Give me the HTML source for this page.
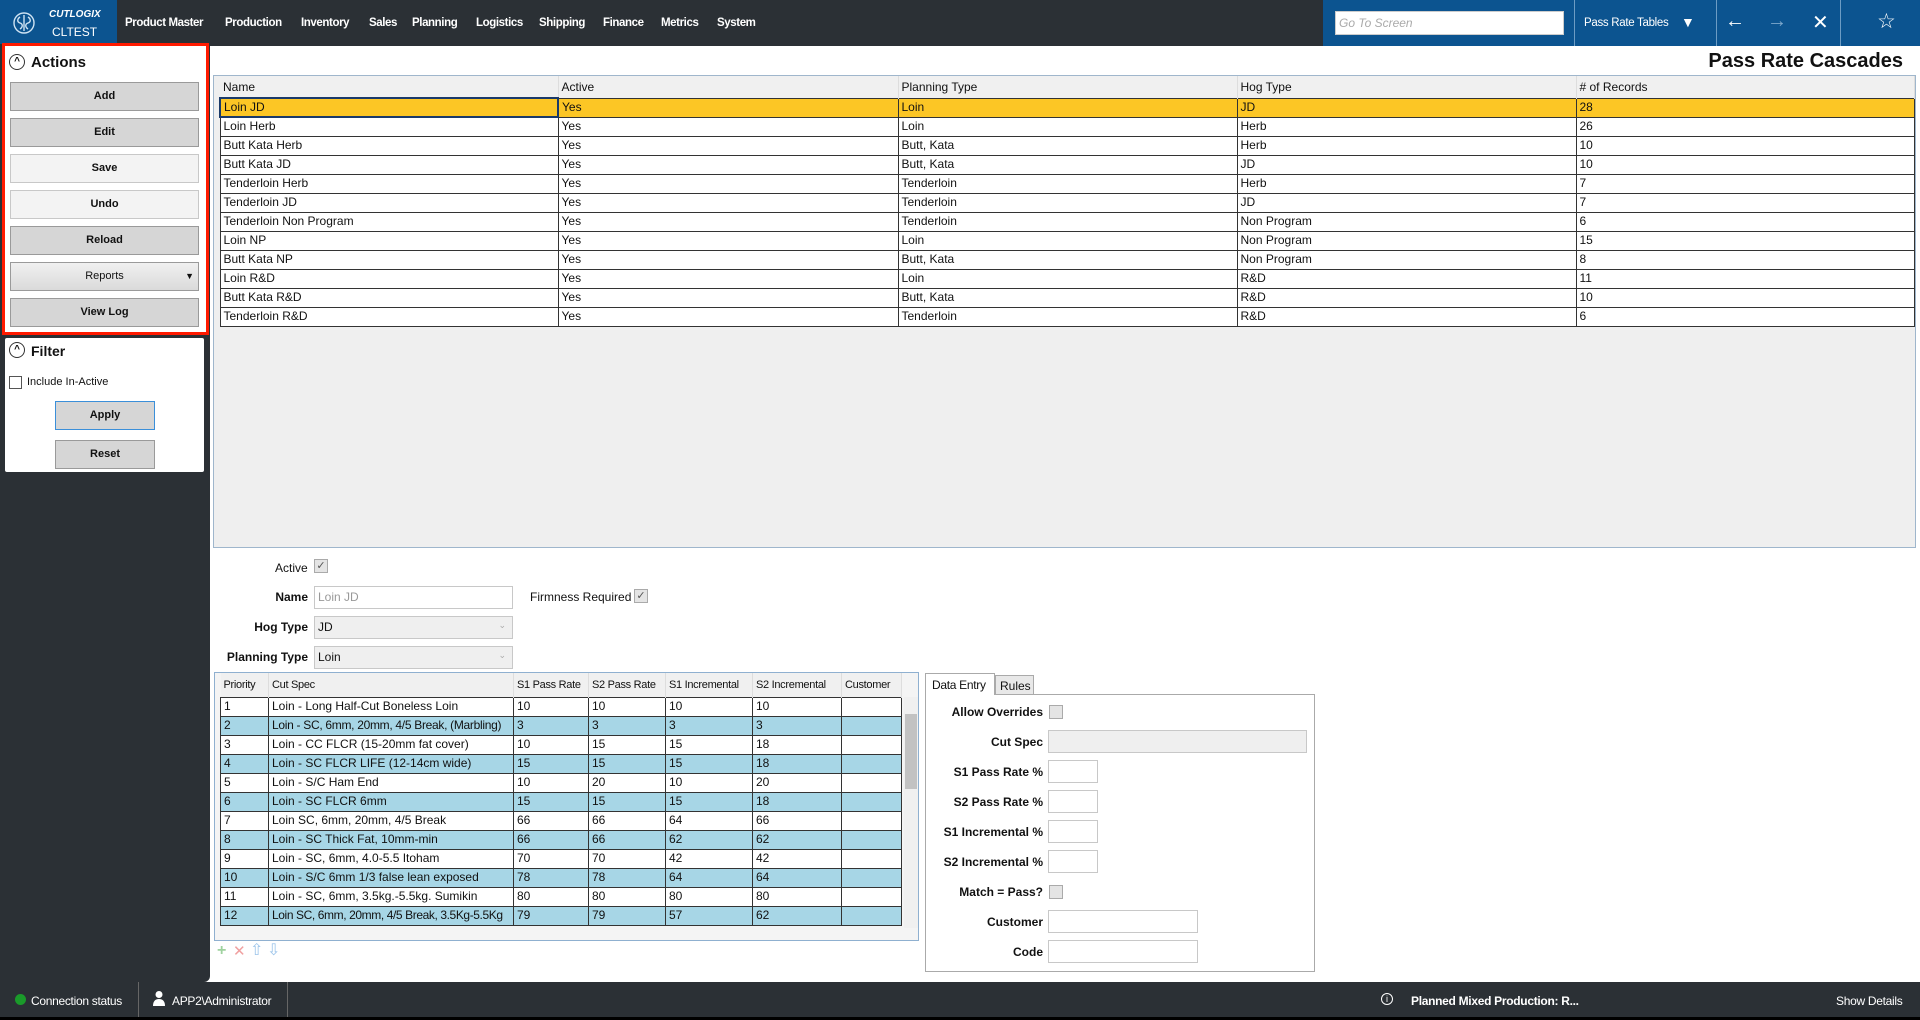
<!DOCTYPE html>
<html><head><meta charset="utf-8"><style>
*{box-sizing:border-box;margin:0;padding:0}
body{width:1920px;height:1020px;overflow:hidden;background:#fff;font-family:"Liberation Sans",sans-serif;font-size:12px;color:#111;position:relative}
.a{position:absolute;white-space:nowrap}
.nav{left:0;top:0;width:1920px;height:46px;background:#2b3035}
.logo{left:0;top:0;width:117px;height:44px;background:#0c5490}
.navi{top:17px;color:#fff;font-weight:bold;font-size:11.5px;letter-spacing:-0.4px}
.rb{top:0;left:1323px;width:597px;height:46px;background:#0c5490}
.side{left:0;top:46px;width:210px;height:936px;background:#2b3035;border-radius:0 0 6px 0}
.btn{position:absolute;left:10px;width:189px;height:29px;background:#d6d6d6;border:1px solid #9a9a9a;font-weight:bold;font-size:11px;text-align:center;line-height:27px}
.btn.l{background:#f3f3f3;border-color:#c8c8c8}
table{border-collapse:collapse;table-layout:fixed}
.g td{height:19px;border:1px solid #333;padding:0 3px;font-size:12px;white-space:nowrap;overflow:hidden;line-height:17px}
.g th{height:22px;font-weight:normal;text-align:left;padding:0 3px;font-size:12px;border-right:1px solid #ddd;background:#f0f0f0;white-space:nowrap;overflow:hidden}
.lg th{font-size:11px;letter-spacing:-0.3px}
.lbl{font-weight:bold;font-size:12px;text-align:right}
.inp{position:absolute;height:23px;border:1px solid #c8c8c8;background:#fff}
.cb{position:absolute;width:14px;height:14px;border:1px solid #aaa;background:#e4e4e4;font-size:11px;line-height:12px;text-align:center;color:#555}
.bl td{background:#a7d6e6}
</style></head><body>
<div class="a nav"></div>
<div class="a logo">
<svg class="a" style="left:12px;top:11px" width="24" height="24" viewBox="0 0 24 24" fill="none" stroke="#cfe3f3" stroke-width="1.4"><circle cx="12" cy="12" r="10"/><path d="M8 6c-3 2-3 5 0 6s3 4 0 6M16 6c3 2 3 5 0 6s-3 4 0 6M12 4v16"/></svg>
<div class="a" style="left:49px;top:9px;color:#fff;font-weight:bold;font-style:italic;font-size:10px">CUTLOGIX</div>
<div class="a" style="left:52px;top:25px;color:#fff;font-size:12px">CLTEST</div>
</div>
<div class="a navi" style="left:125px">Product Master</div>
<div class="a navi" style="left:225px">Production</div>
<div class="a navi" style="left:301px">Inventory</div>
<div class="a navi" style="left:369px">Sales</div>
<div class="a navi" style="left:412px">Planning</div>
<div class="a navi" style="left:476px">Logistics</div>
<div class="a navi" style="left:539px">Shipping</div>
<div class="a navi" style="left:603px">Finance</div>
<div class="a navi" style="left:661px">Metrics</div>
<div class="a navi" style="left:717px">System</div>
<div class="a rb"></div>
<div class="a" style="left:1335px;top:11px;width:229px;height:24px;background:#fff;border:1px solid #ccc;color:#aaa;font-style:italic;font-size:12px;padding:4px 3px">Go To Screen</div>
<div class="a" style="left:1574px;top:0;width:1px;height:46px;background:#6d9cc4"></div>
<div class="a" style="left:1716px;top:0;width:1px;height:46px;background:#6d9cc4"></div>
<div class="a" style="left:1840px;top:0;width:1px;height:46px;background:#6d9cc4"></div>
<div class="a" style="left:1584px;top:17px;color:#fff;font-size:11.5px;letter-spacing:-0.3px">Pass Rate Tables</div>
<div class="a" style="left:1681px;top:14px;color:#fff;font-size:14px">▼</div>
<div class="a" style="left:1725px;top:10px;color:#fff;font-size:20px">←</div>
<div class="a" style="left:1767px;top:10px;color:#7ea8cc;font-size:20px">→</div>
<div class="a" style="left:1812px;top:10px;color:#fff;font-size:20px">✕</div>
<div class="a" style="left:1877px;top:9px;color:#fff;font-size:21px">☆</div>

<div class="a side"></div>
<div class="a" style="left:2px;top:43px;width:207px;height:292px;background:#fff;border:3px solid #ff1a00"></div>
<div class="a" style="left:9px;top:54px;width:16px;height:16px;border:1.5px solid #333;border-radius:50%;font-size:10px;text-align:center;line-height:14px;font-weight:bold">^</div>
<div class="a" style="left:31px;top:54px;font-weight:bold;font-size:15px">Actions</div>
<div class="btn" style="top:82px">Add</div>
<div class="btn" style="top:118px">Edit</div>
<div class="btn l" style="top:154px">Save</div>
<div class="btn l" style="top:190px">Undo</div>
<div class="btn" style="top:226px">Reload</div>
<div class="btn" style="top:262px;font-weight:normal;background:linear-gradient(#f0f0f0,#dadada)">Reports<span style="position:absolute;right:4px;font-size:9px">▼</span></div>
<div class="btn" style="top:298px">View Log</div>
<div class="a" style="left:5px;top:338px;width:199px;height:134px;background:#fff;border-radius:2px"></div>
<div class="a" style="left:9px;top:342px;width:16px;height:16px;border:1.5px solid #333;border-radius:50%;font-size:10px;text-align:center;line-height:14px;font-weight:bold">^</div>
<div class="a" style="left:31px;top:343px;font-weight:bold;font-size:14px">Filter</div>
<div class="a" style="left:9px;top:376px;width:13px;height:13px;border:1px solid #555;background:#fff"></div>
<div class="a" style="left:27px;top:376px;font-size:11px">Include In-Active</div>
<div class="btn" style="left:55px;top:401px;width:100px;border-color:#3b8fd9">Apply</div>
<div class="btn" style="left:55px;top:440px;width:100px">Reset</div>

<div class="a" style="right:17px;top:50px;font-weight:bold;font-size:20px">Pass Rate Cascades</div>

<div class="a" style="left:213px;top:75px;width:1703px;height:473px;background:#efefef;border:1px solid #9fb6cc">
<table class="g" style="margin-left:5px;width:1696px">
<colgroup><col style="width:338px"><col style="width:340px"><col style="width:339px"><col style="width:339px"><col></colgroup>
<tr><th>Name</th><th>Active</th><th>Planning Type</th><th>Hog Type</th><th># of Records</th></tr>
<tr style="background:#fcc625"><td style="border:2px solid #1a3a6a">Loin JD</td><td>Yes</td><td>Loin</td><td>JD</td><td>28</td></tr>
<tr style="background:#fff"><td>Loin Herb</td><td>Yes</td><td>Loin</td><td>Herb</td><td>26</td></tr>
<tr style="background:#fff"><td>Butt Kata Herb</td><td>Yes</td><td>Butt, Kata</td><td>Herb</td><td>10</td></tr>
<tr style="background:#fff"><td>Butt Kata JD</td><td>Yes</td><td>Butt, Kata</td><td>JD</td><td>10</td></tr>
<tr style="background:#fff"><td>Tenderloin Herb</td><td>Yes</td><td>Tenderloin</td><td>Herb</td><td>7</td></tr>
<tr style="background:#fff"><td>Tenderloin JD</td><td>Yes</td><td>Tenderloin</td><td>JD</td><td>7</td></tr>
<tr style="background:#fff"><td>Tenderloin Non Program</td><td>Yes</td><td>Tenderloin</td><td>Non Program</td><td>6</td></tr>
<tr style="background:#fff"><td>Loin NP</td><td>Yes</td><td>Loin</td><td>Non Program</td><td>15</td></tr>
<tr style="background:#fff"><td>Butt Kata NP</td><td>Yes</td><td>Butt, Kata</td><td>Non Program</td><td>8</td></tr>
<tr style="background:#fff"><td>Loin R&amp;D</td><td>Yes</td><td>Loin</td><td>R&amp;D</td><td>11</td></tr>
<tr style="background:#fff"><td>Butt Kata R&amp;D</td><td>Yes</td><td>Butt, Kata</td><td>R&amp;D</td><td>10</td></tr>
<tr style="background:#fff"><td>Tenderloin R&amp;D</td><td>Yes</td><td>Tenderloin</td><td>R&amp;D</td><td>6</td></tr>
</table></div>

<div class="a" style="left:275px;top:561px;font-size:12px">Active</div>
<div class="cb" style="left:314px;top:559px">✓</div>
<div class="a lbl" style="left:200px;width:108px;top:590px">Name</div>
<div class="inp" style="left:314px;top:586px;width:199px;color:#999;padding:3px">Loin JD</div>
<div class="a" style="left:530px;top:590px">Firmness Required</div>
<div class="cb" style="left:634px;top:589px">✓</div>
<div class="a lbl" style="left:200px;width:108px;top:620px">Hog Type</div>
<div class="inp" style="left:314px;top:616px;width:199px;background:#efefef;padding:3px">JD<span style="position:absolute;right:6px;color:#aaa;font-size:9px">⌄</span></div>
<div class="a lbl" style="left:200px;width:108px;top:650px">Planning Type</div>
<div class="inp" style="left:314px;top:646px;width:199px;background:#efefef;padding:3px">Loin<span style="position:absolute;right:6px;color:#aaa;font-size:9px">⌄</span></div>

<div class="a" style="left:214px;top:672px;width:705px;height:269px;border:1px solid #8fb0d0;background:#f4f4f4">
<table class="g lg" style="margin-left:5px;width:682px">
<colgroup><col style="width:48px"><col style="width:245px"><col style="width:75px"><col style="width:77px"><col style="width:87px"><col style="width:89px"><col></colgroup>
<tr><th style="height:24px">Priority</th><th>Cut Spec</th><th>S1 Pass Rate</th><th>S2 Pass Rate</th><th>S1 Incremental</th><th>S2 Incremental</th><th>Customer</th></tr>
<tr style="background:#fff"><td>1</td><td>Loin - Long Half-Cut Boneless Loin</td><td>10</td><td>10</td><td>10</td><td>10</td><td></td></tr>
<tr class="bl"><td>2</td><td style="letter-spacing:-0.3px">Loin - SC, 6mm, 20mm, 4/5 Break, (Marbling)</td><td>3</td><td>3</td><td>3</td><td>3</td><td></td></tr>
<tr style="background:#fff"><td>3</td><td>Loin - CC FLCR (15-20mm fat cover)</td><td>10</td><td>15</td><td>15</td><td>18</td><td></td></tr>
<tr class="bl"><td>4</td><td>Loin - SC FLCR LIFE (12-14cm wide)</td><td>15</td><td>15</td><td>15</td><td>18</td><td></td></tr>
<tr style="background:#fff"><td>5</td><td>Loin - S/C Ham End</td><td>10</td><td>20</td><td>10</td><td>20</td><td></td></tr>
<tr class="bl"><td>6</td><td>Loin - SC FLCR 6mm</td><td>15</td><td>15</td><td>15</td><td>18</td><td></td></tr>
<tr style="background:#fff"><td>7</td><td>Loin SC, 6mm, 20mm, 4/5 Break</td><td>66</td><td>66</td><td>64</td><td>66</td><td></td></tr>
<tr class="bl"><td>8</td><td>Loin - SC Thick Fat, 10mm-min</td><td>66</td><td>66</td><td>62</td><td>62</td><td></td></tr>
<tr style="background:#fff"><td>9</td><td>Loin - SC, 6mm, 4.0-5.5 Itoham</td><td>70</td><td>70</td><td>42</td><td>42</td><td></td></tr>
<tr class="bl"><td>10</td><td>Loin - S/C 6mm 1/3 false lean exposed</td><td>78</td><td>78</td><td>64</td><td>64</td><td></td></tr>
<tr style="background:#fff"><td>11</td><td>Loin - SC, 6mm, 3.5kg.-5.5kg. Sumikin</td><td>80</td><td>80</td><td>80</td><td>80</td><td></td></tr>
<tr class="bl"><td>12</td><td style="letter-spacing:-0.4px">Loin SC, 6mm, 20mm, 4/5 Break, 3.5Kg-5.5Kg</td><td>79</td><td>79</td><td>57</td><td>62</td><td></td></tr>
</table>
<div class="a" style="left:689px;top:24px;width:14px;height:231px;background:#f0f0f0"></div>
<div class="a" style="left:690px;top:41px;width:12px;height:75px;background:#c2c2c2"></div>
</div>
<div class="a" style="left:217px;top:942px;color:#9fd29f;font-size:16px;font-weight:bold">+</div>
<div class="a" style="left:233px;top:942px;color:#f0a0a0;font-size:15px">✕</div>
<div class="a" style="left:250px;top:940px;color:#9cc4ea;font-size:16px">⇧</div>
<div class="a" style="left:267px;top:940px;color:#9cc4ea;font-size:16px">⇩</div>

<div class="a" style="left:925px;top:673px;width:70px;height:22px;background:#fff;border:1px solid #aaa;border-bottom:none;padding:4px 6px;z-index:2;letter-spacing:-0.3px">Data Entry</div>
<div class="a" style="left:995px;top:675px;width:39px;height:20px;background:#e8e8e8;border:1px solid #aaa;padding:3px 4px">Rules</div>
<div class="a" style="left:925px;top:694px;width:390px;height:278px;border:1px solid #aaa;background:#fff"></div>
<div class="a lbl" style="left:925px;width:118px;top:705px">Allow Overrides</div><div class="cb" style="left:1049px;top:705px"></div>
<div class="a lbl" style="left:925px;width:118px;top:735px">Cut Spec</div><div class="inp" style="left:1048px;top:730px;width:259px;background:#efefef"></div>
<div class="a lbl" style="left:925px;width:118px;top:765px">S1 Pass Rate %</div><div class="inp" style="left:1048px;top:760px;width:50px"></div>
<div class="a lbl" style="left:925px;width:118px;top:795px">S2 Pass Rate %</div><div class="inp" style="left:1048px;top:790px;width:50px"></div>
<div class="a lbl" style="left:925px;width:118px;top:825px">S1 Incremental %</div><div class="inp" style="left:1048px;top:820px;width:50px"></div>
<div class="a lbl" style="left:925px;width:118px;top:855px">S2 Incremental %</div><div class="inp" style="left:1048px;top:850px;width:50px"></div>
<div class="a lbl" style="left:925px;width:118px;top:885px">Match = Pass?</div><div class="cb" style="left:1049px;top:885px"></div>
<div class="a lbl" style="left:925px;width:118px;top:915px">Customer</div><div class="inp" style="left:1048px;top:910px;width:150px"></div>
<div class="a lbl" style="left:925px;width:118px;top:945px">Code</div><div class="inp" style="left:1048px;top:940px;width:150px"></div>

<div class="a" style="left:0;top:982px;width:1920px;height:35px;background:#2b3035"></div>
<div class="a" style="left:0;top:1017px;width:1920px;height:3px;background:#000"></div>
<div class="a" style="left:15px;top:994px;width:11px;height:11px;border-radius:50%;background:#1a9a2a"></div>
<div class="a" style="left:31px;top:994px;color:#fff;letter-spacing:-0.3px">Connection status</div>
<div class="a" style="left:138px;top:982px;width:1px;height:35px;background:#666"></div>
<svg class="a" style="left:152px;top:990px" width="14" height="16" viewBox="0 0 14 16" fill="#fff"><circle cx="7" cy="4.5" r="3.5"/><path d="M1 16c0-5 2.5-7 6-7s6 2 6 7z"/></svg>
<div class="a" style="left:172px;top:994px;color:#fff;letter-spacing:-0.3px">APP2\Administrator</div>
<div class="a" style="left:287px;top:982px;width:1px;height:35px;background:#666"></div>
<div class="a" style="left:1381px;top:993px;width:12px;height:12px;border:1px solid #fff;border-radius:50%;color:#fff;font-size:9px;text-align:center;line-height:10px">i</div>
<div class="a" style="left:1411px;top:994px;color:#fff;font-weight:bold;letter-spacing:-0.3px">Planned Mixed Production: R...</div>
<div class="a" style="left:1836px;top:994px;color:#fff;letter-spacing:-0.3px">Show Details</div>
</body></html>
